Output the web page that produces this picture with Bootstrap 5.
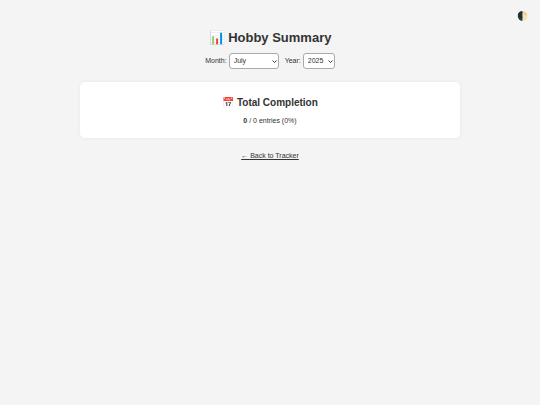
<!DOCTYPE html>
<html lang="en">
<head>
<meta charset="utf-8">
<meta name="viewport" content="width=device-width, initial-scale=1">
<title>Hobby Summary</title>
<link href="https://cdn.jsdelivr.net/npm/bootstrap@5.3.0/dist/css/bootstrap.min.css" rel="stylesheet">
<style>
body{font-family:"Liberation Sans",Arial,sans-serif;font-size:7px;line-height:10px;background:#f4f4f4;color:#333}
.theme-toggle{top:10px;right:12px;font-size:9px;line-height:12px;color:inherit}
.page-main{max-width:412px;padding:29px 16px 16px}
.page-title{font-size:13px;line-height:18px;margin-bottom:6px}
.filters{margin-bottom:13px}
.filters label{margin-right:2px}
.filters .form-select{width:auto;height:16px;padding:0 12px 0 4px;font-size:7px;line-height:14px;color:#333;border:1px solid #aaa;border-radius:3px;background-color:#fff;background-image:url("data:image/svg+xml,%3Csvg xmlns='http://www.w3.org/2000/svg' viewBox='0 0 10 10'%3E%3Cpath d='M1 3l4 4 4-4' fill='none' stroke='%23333' stroke-width='2'/%3E%3C/svg%3E");background-size:5px 5px;background-position:right 1px center}
.filters .month-select{width:50px;margin-right:6px}
.filters .year-select{width:32px;padding-right:8px}
.panel{border-radius:5px;box-shadow:0 0 4px rgba(0,0,0,.05);padding:14px 16px 12px;margin-bottom:13px}
.panel-title{font-size:10px;line-height:14px;margin-bottom:6px}
.back-link{color:#333}
</style>
</head>
<body>
<button type="button" class="theme-toggle btn border-0 p-0 position-absolute" aria-label="Toggle theme">🌓</button>
<main class="page-main container-fluid text-center">
  <h1 class="page-title fw-bold">📊 Hobby Summary</h1>
  <form class="filters d-flex justify-content-center align-items-center">
    <label for="month">Month:</label>
    <select id="month" class="form-select month-select">
      <option>January</option><option>February</option><option>March</option><option>April</option><option>May</option><option>June</option><option selected>July</option><option>August</option><option>September</option><option>October</option><option>November</option><option>December</option>
    </select>
    <label for="year">Year:</label>
    <select id="year" class="form-select year-select">
      <option>2024</option><option selected>2025</option><option>2026</option>
    </select>
  </form>
  <section class="panel bg-white">
    <h2 class="panel-title fw-bold">📅 Total Completion</h2>
    <p class="mb-0"><strong>0</strong> / 0 entries (0%)</p>
  </section>
  <a class="back-link" href="#">← Back to Tracker</a>
</main>
<script src="https://cdn.jsdelivr.net/npm/bootstrap@5.3.0/dist/js/bootstrap.bundle.min.js"></script>
</body>
</html>
